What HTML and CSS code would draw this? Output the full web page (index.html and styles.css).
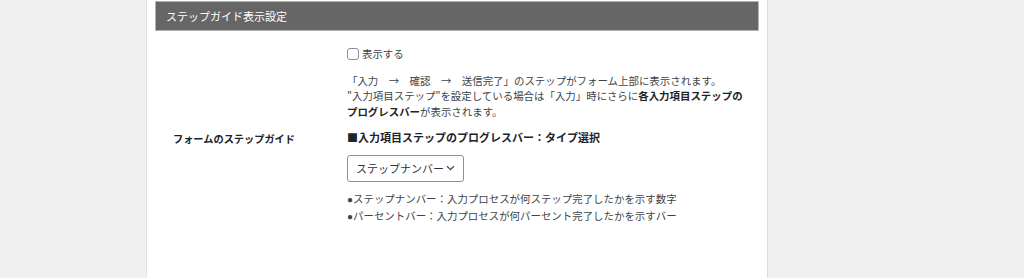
FILE: index.html
```html
<!DOCTYPE html>
<html lang="ja">
<head>
<meta charset="utf-8">
<title>ステップガイド表示設定</title>
<link rel="stylesheet" href="styles.css">
</head>
<body>
<div class="page">
  <div class="panel">
    <h3 class="panel-head">ステップガイド表示設定</h3>
    <div class="form-row">
      <div class="label">フォームのステップガイド</div>
      <div class="field">
        <label class="check-row"><input type="checkbox" class="check"><span>表示する</span></label>
        <p class="desc">「入力　→　確認　→　送信完了」のステップがフォーム上部に表示されます。<br>"入力項目ステップ"を設定している場合は「入力」時にさらに<strong>各入力項目ステップのプログレスバー</strong>が表示されます。</p>
        <p class="sub-head">■入力項目ステップのプログレスバー：タイプ選択</p>
        <select class="select">
          <option>ステップナンバー</option>
          <option>パーセントバー</option>
        </select>
        <p class="notes"><span class="dot">●</span>ステップナンバー：入力プロセスが何ステップ完了したかを示す数字<br><span class="dot">●</span>パーセントバー：入力プロセスが何パーセント完了したかを示すバー</p>
      </div>
    </div>
  </div>
</div>
</body>
</html>
```
FILE: styles.css
```css
html, body {
  margin: 0;
  padding: 0;
  background: #f0f0f0;
}
body {
  font-family: "Noto Sans CJK JP", "Noto Sans", sans-serif;
  font-size: 10.45px;
  color: #3c434a;
}
.page {
  padding-left: 146px;
}
.panel {
  width: 604px;
  padding: 1px 8px 60px;
  background: #fff;
  border-left: 1px solid #e2e2e2;
  border-right: 1px solid #dcdcde;
  min-height: 300px;
}
.panel-head {
  margin: 0;
  height: 28px;
  line-height: 28px;
  padding-left: 10px;
  background: #666;
  border: 1px solid #b4b4b4;
  color: #fff;
  font-size: 11px;
  font-weight: normal;
}
.form-row {
  display: grid;
  grid-template-columns: 192px 1fr;
}
.label {
  align-self: center;
  padding-left: 18px;
  padding-top: 21px;
  font-size: 10.2px;
  font-weight: bold;
  color: #1d2327;
}
.field {
  padding: 15px 12px 0 0;
}
.check-row {
  display: flex;
  align-items: center;
  gap: 3px;
  height: 16px;
  line-height: 16px;
}
.check {
  appearance: none;
  -webkit-appearance: none;
  margin: 0;
  width: 12px;
  height: 12px;
  border: 1px solid #8c8f94;
  border-radius: 3px;
  background: #fff;
  box-sizing: border-box;
}
.desc {
  margin: 10.5px 0 0;
  line-height: 15.5px;
}
.desc strong {
  color: #1d2327;
}
.sub-head {
  margin: 11px 0 0;
  line-height: 15.5px;
  font-size: 11px;
  font-weight: bold;
  color: #1d2327;
}
.select {
  display: block;
  margin-top: 9px;
  width: 117px;
  height: 27px;
  padding: 0 20px 0 8px;
  border: 1px solid #8c8f94;
  border-radius: 3px;
  appearance: none;
  -webkit-appearance: none;
  background: #fff url("data:image/svg+xml;utf8,<svg xmlns='http://www.w3.org/2000/svg' width='9' height='6' viewBox='0 0 9 6'><path d='M1 1.2 L4.5 4.6 L8 1.2' fill='none' stroke='%23555' stroke-width='1.4'/></svg>") no-repeat right 8px center;
  font-family: inherit;
  font-size: 11px;
  color: #2c3338;
}
.notes {
  margin: 9px 0 0;
  line-height: 16px;
}
.dot {
  font-family: "Liberation Sans", sans-serif;
  font-size: 10px;
}
```
